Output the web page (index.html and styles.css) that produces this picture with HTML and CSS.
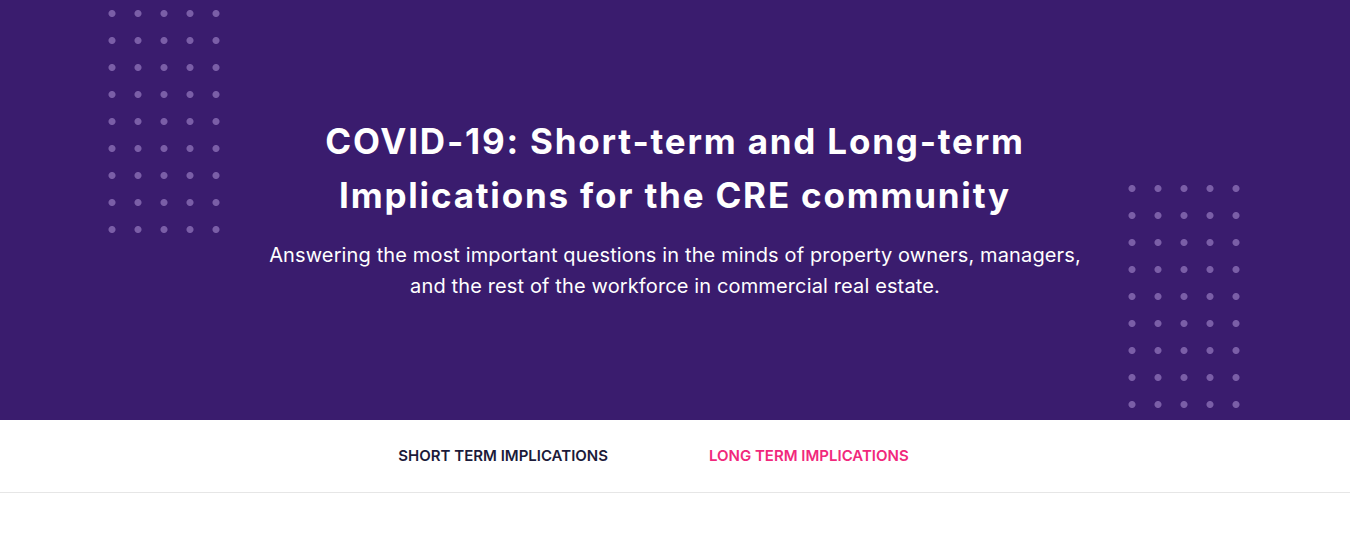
FILE: index.html
```html
<!DOCTYPE html>
<html lang="en">
<head>
<meta charset="utf-8">
<title>COVID-19 Implications</title>
<link rel="stylesheet" href="styles.css">
</head>
<body>
<section class="hero">
  <div class="dots dots-left"></div>
  <div class="dots dots-right"></div>
  <h1 class="hero-title">COVID-19: Short-term and Long-term<br>Implications for the CRE community</h1>
  <p class="hero-sub">Answering the most important questions in the minds of property owners, managers,<br>and the rest of the workforce in commercial real estate.</p>
</section>
<nav class="tabs">
  <a class="tab">SHORT TERM IMPLICATIONS</a>
  <a class="tab tab-active">LONG TERM IMPLICATIONS</a>
</nav>
</body>
</html>
```

FILE: styles.css
```css
html, body {
  margin: 0;
  padding: 0;
  background: #ffffff;
}
body {
  font-family: "Inter", "Liberation Sans", sans-serif;
}
.hero {
  position: relative;
  height: 420px;
  box-sizing: border-box;
  padding-top: 114px;
  background: #3a1c6e;
  color: #ffffff;
  text-align: center;
}
.hero-title {
  margin: 0;
  font-size: 35px;
  line-height: 54px;
  font-weight: 700;
  letter-spacing: 1.8px;
}
.hero-sub {
  margin: 18px 0 0;
  font-size: 20px;
  line-height: 31px;
  font-weight: 400;
  letter-spacing: 0.13px;
}
.dots {
  position: absolute;
  width: 130px;
  height: 243px;
  background-image: radial-gradient(circle, #7a5ea7 3px, rgba(122, 94, 167, 0) 4px);
  background-size: 26px 27px;
}
.dots-left {
  left: 99px;
  top: 0;
}
.dots-right {
  left: 1119px;
  top: 175px;
}
.tabs {
  display: flex;
  justify-content: center;
  align-items: center;
  gap: 101px;
  height: 73px;
  box-sizing: border-box;
  padding: 0 43px 1px 0;
  border-bottom: 1px solid #e6e6e6;
}
.tab {
  font-size: 15px;
  font-weight: 600;
  color: #1c1b3a;
}
.tab-active {
  color: #f1287c;
}
```
